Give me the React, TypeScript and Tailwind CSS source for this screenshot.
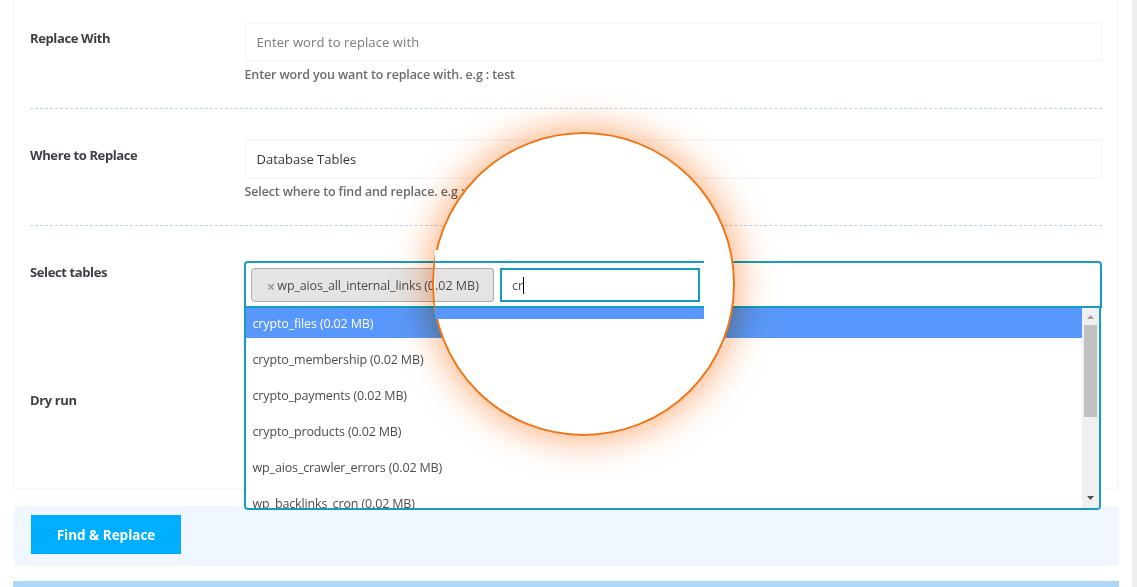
import type { ReactNode } from 'react';

const options = [
  { label: 'crypto_files (0.02 MB)', active: true },
  { label: 'crypto_membership (0.02 MB)', active: false },
  { label: 'crypto_payments (0.02 MB)', active: false },
  { label: 'crypto_products (0.02 MB)', active: false },
  { label: 'wp_aios_crawler_errors (0.02 MB)', active: false },
  { label: 'wp_backlinks_cron (0.02 MB)', active: false },
];

function Row({ label, children, last = false }: { label: string; children?: ReactNode; last?: boolean }) {
  return (
    <div className={last ? 'flex h-[128px] pt-[30px]' : 'flex h-[117px] border-b border-dashed border-[#bdd3e8] pt-[30px]'}>
      <div className="w-[214px] shrink-0 pt-[6px] text-[13px] leading-5 font-bold tracking-[-0.38px] text-[#3c3f44]">
        <span>{label}</span>
      </div>
      <div className="min-w-0 flex-1">{children}</div>
    </div>
  );
}

function Help({ children }: { children: ReactNode }) {
  return (
    <div className="mt-[3px] pl-[0.5px] text-[12.5px] leading-5 font-semibold tracking-[-0.13px] whitespace-nowrap text-[#6b6b6d]">
      <span>{children}</span>
    </div>
  );
}

function Dropdown() {
  return (
    <div className="absolute top-[45px] left-0 flex h-[204px] w-[857px] overflow-hidden rounded-b border-2 border-[#159cc2] bg-white">
      <ul className="flex-1 text-[12.5px] leading-[30px] tracking-[-0.14px] text-[#4c4c50]">
        {options.map((o) => (
          <li
            key={o.label}
            className={o.active ? 'mb-[3px] h-[30px] bg-[#5897fb] pt-px pl-[6.5px] text-white' : 'h-9 pt-1 pl-[6.5px]'}
          >
            <span>{o.label}</span>
          </li>
        ))}
      </ul>
      <div className="flex w-[17px] flex-col items-center bg-[#f0f0f0]">
        <svg className="mt-[7px] h-1 w-[7px]" viewBox="0 0 7 4"><path d="M0 4L3.5 0L7 4Z" fill="#a0a0a0" /></svg>
        <div className="mt-[6px] h-[92px] w-[13px] bg-[#c1c1c1]" />
        <svg className="mt-auto mb-2 h-1 w-[7px]" viewBox="0 0 7 4"><path d="M0 0H7L3.5 4Z" fill="#4e4e4e" /></svg>
      </div>
    </div>
  );
}

function Lens() {
  return (
    <>
      <div className="absolute top-[132px] left-[432px] h-[304px] w-[303px] rounded-full mix-blend-multiply shadow-[0_0_35px_5px_rgba(247,118,30,0.55)]" />
      <div className="absolute top-[132px] left-[432px] h-[304px] w-[303px] rounded-full border-2 border-[#ee7518] bg-white" />
      <div className="absolute top-[250px] left-[435px] h-[69px] w-[269px] overflow-hidden bg-white pt-[11px]">
        <div className="flex h-[47px] border-y-2 border-[#159cc2] py-1">
          <div className="mt-[1px] flex h-[34px] w-[59px] items-center rounded-r-[4px] border border-l-0 border-[#aaa] bg-[#e4e4e4] pt-[2px] text-[12.5px] text-[#4c4c50]">
            <span>.02 MB)</span>
          </div>
          <div className="mt-px ml-[6px] flex h-[34px] w-[200px] items-center border-2 border-[#159cc2] bg-white pt-[2px] pl-[10px] text-[12.5px] text-[#4c4c50]">
            <span>cr</span>
            <i className="mb-[2px] h-[17px] w-px bg-black" />
          </div>
        </div>
        <div className="h-[11px] bg-[#5897fb]" />
      </div>
    </>
  );
}

export default function App() {
  return (
    <div className="relative flex h-[587px] w-[1137px] overflow-hidden bg-white font-['Open_Sans','Noto_Sans',sans-serif]">
      <main className="flex flex-1 flex-col pr-[13px] pl-[13px]">
        <section className="h-[490px] shrink-0 rounded-b border-x-2 border-b-2 border-[#f7f8fa] px-[15px]">
          <div className="-mt-[8px]">
            <Row label="Replace With">
              <div className="-mr-px ml-[1px] flex h-10 items-center rounded-[3px] border-2 border-[#f7f8fb] pt-px pl-[9.5px] text-[13px] tracking-[0.1px] text-[#777a80]">
                <span>Enter word to replace with</span>
              </div>
              <Help>Enter word you want to replace with. e.g : test</Help>
            </Row>
            <Row label="Where to Replace">
              <div className="-mr-px ml-[1px] flex h-10 items-center rounded-[3px] border-2 border-[#f7f8fb] pt-px pl-[9.5px] text-[13px] text-[#33363b]">
                <span>Database Tables</span>
              </div>
              <Help>Select where to find and replace. e.g : posts</Help>
            </Row>
            <Row label="Select tables" last>
              <div className="relative mt-[5px] h-[47px] w-[858px] rounded-t border-2 border-[#159cc2] bg-white px-[5px] pt-1">
                <div className="mt-px flex h-[34px] w-[243px] items-center rounded-[4px] border border-[#aaa] bg-[#e4e4e4] pt-[2px] pl-[15px] text-[12.5px] tracking-[-0.15px] whitespace-nowrap text-[#4c4c50]">
                  <b className="mr-[2.5px] text-[14px] text-[#999]">×</b>
                  <span>wp_aios_all_internal_links (0</span>
                </div>
                <div className="absolute top-[-2px] left-[-2px]"><Dropdown /></div>
              </div>
            </Row>
            <Row label="Dry run" last />
          </div>
        </section>
        <footer className="mt-4 ml-px h-[60px] shrink-0 bg-[#f1f7ff] pt-[9px] pl-[17px]">
          <button className="h-[39px] w-[150px] bg-[#00aeff] pt-[2px] text-[13.5px] font-bold text-white">
            <span>Find &amp; Replace</span>
          </button>
        </footer>
        <div className="mt-[15px] h-[6px] bg-[#add8f5]" />
      </main>
      <aside className="w-[5px] bg-[#efeff1]" />
      <Lens />
    </div>
  );
}
